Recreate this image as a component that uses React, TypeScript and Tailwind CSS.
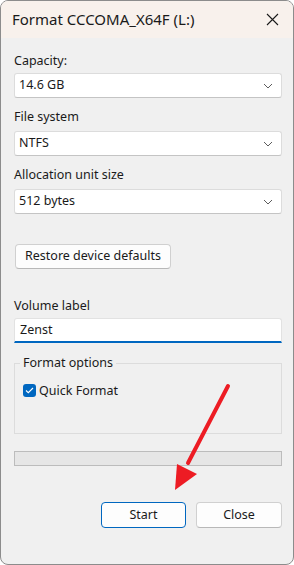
import React from 'react';

const font = { fontFamily: '"Segoe UI", "Noto Sans", "Open Sans", sans-serif' };

function Chevron() {
  return (
    <svg width="10" height="6" viewBox="0 0 10 6" className="text-[#5c5c5c]">
      <path d="M1 1l4 4 4-4" fill="none" stroke="currentColor" strokeWidth="1" />
    </svg>
  );
}

function Select({ value }: { value: string }) {
  return (
    <div className="h-[25px] bg-white border border-[#dcdcdc] border-b-[#c4c4c4] rounded-[3px] flex items-center justify-between pl-[4px] pr-[8px]">
      <span className="text-[12.5px] text-[#1a1a1a]">{value}</span>
      <Chevron />
    </div>
  );
}

function Label({ children, className }: { children: React.ReactNode; className?: string }) {
  return <div className={'text-[12.5px] leading-[16px] text-[#1a1a1a] ' + (className ?? '')}>{children}</div>;
}

export default function App() {
  return (
    <div className="w-[294px] h-[565px] bg-white" style={font}>
      <div className="relative w-full h-full border border-[#8c8c8c] rounded-[8px] overflow-hidden bg-[#f0f0f0] flex flex-col">
        {/* title bar */}
        <div className="h-[37px] bg-[#f8f1ec] flex items-center justify-between pl-[11px] pr-[14px] shrink-0">
          <span className="text-[15px] text-[#1a1a1a]">Format CCCOMA_X64F (L:)</span>
          <svg width="13" height="13" viewBox="0 0 13 13">
            <path d="M1 1l11 11M12 1L1 12" stroke="#1a1a1a" strokeWidth="1.1" />
          </svg>
        </div>

        <div className="flex flex-col pl-[13px] pr-[11px]">
          <Label className="mt-[15px]">Capacity:</Label>
          <div className="mt-[4px]"><Select value="14.6 GB" /></div>

          <Label className="mt-[11px]">File system</Label>
          <div className="mt-[6px]"><Select value="NTFS" /></div>

          <Label className="mt-[11px]">Allocation unit size</Label>
          <div className="mt-[6px]"><Select value="512 bytes" /></div>

          <div className="mt-[28px]">
            <button className="h-[25px] px-[9px] ml-[1px] bg-[#fdfdfd] border border-[#d0d0d0] border-b-[#b8b8b8] rounded-[4px] text-[12.5px] text-[#1a1a1a]">
              Restore device defaults
            </button>
          </div>

          <Label className="mt-[29px]">Volume label</Label>
          <div className="mt-[4px] h-[25px] bg-white border border-[#e2e2e2] border-b-2 border-b-[#0067c0] rounded-t-[3px] flex items-center pl-[5px]">
            <span className="text-[12.5px] text-[#1a1a1a]">Zenst</span>
          </div>

          {/* format options group */}
          <div className="mt-[20px] h-[71px] border border-[#dcdcdc] relative">
            <span className="absolute -top-[9px] left-[5px] px-[3px] bg-[#f0f0f0] text-[12.5px] leading-[16px] text-[#1a1a1a]">
              Format options
            </span>
            <div className="mt-[19px] ml-[8px] flex items-center gap-[3px]">
              <div className="w-[13px] h-[13px] rounded-[3px] bg-[#0067c0] flex items-center justify-center">
                <svg width="9" height="7" viewBox="0 0 9 7">
                  <path d="M1 3.5l2.3 2.2L8 1" fill="none" stroke="white" strokeWidth="1.1" />
                </svg>
              </div>
              <span className="text-[12.5px] leading-[16px] text-[#1a1a1a]">Quick Format</span>
            </div>
          </div>

          <div className="mt-[17px] h-[15px] bg-[#e6e6e6] border border-[#bcbcbc]" />

          <div className="mt-[36px] flex justify-end gap-[10px]">
            <button className="w-[85px] h-[26px] bg-[#fdfdfd] border border-[#0067c0] rounded-[4px] text-[12.5px] text-[#1a1a1a]">
              Start
            </button>
            <button className="w-[86px] h-[26px] bg-[#fdfdfd] border border-[#d0d0d0] border-b-[#b8b8b8] rounded-[4px] text-[12.5px] text-[#1a1a1a]">
              Close
            </button>
          </div>
        </div>

        {/* red annotation arrow */}
        <svg className="absolute left-0 top-0 pointer-events-none" width="294" height="565">
          <line x1="227" y1="385" x2="187" y2="462" stroke="#ed1c24" strokeWidth="4" strokeLinecap="round" />
          <polygon points="174,489 176,463 196,473" fill="#ed1c24" />
        </svg>
      </div>
    </div>
  );
}
